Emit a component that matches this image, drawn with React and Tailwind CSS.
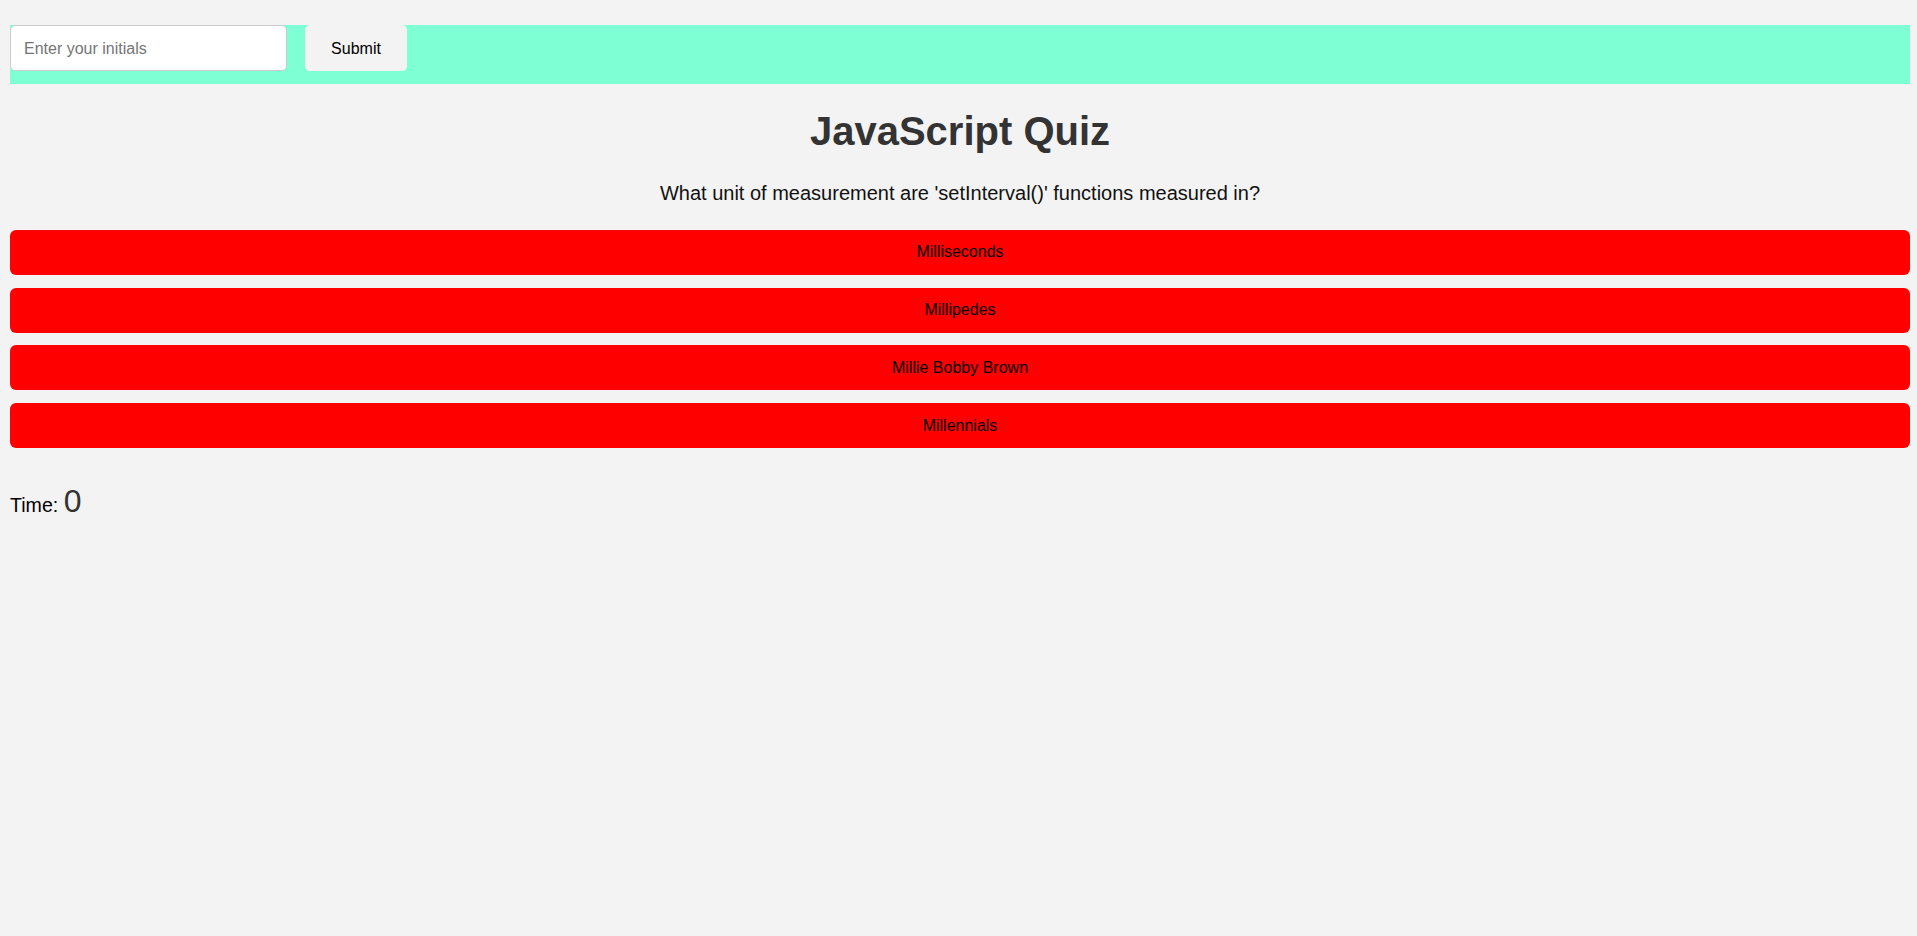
import React from "react";

const answers = ["Milliseconds", "Millipedes", "Millie Bobby Brown", "Millennials"];

export default function App() {
  return (
    <div className="min-h-[936px] bg-[#f3f3f3] pl-[10px] pr-[7px] pt-[25px] font-['Liberation_Sans',Arial,sans-serif] text-black">
      {/* Initials bar */}
      <div className="flex items-start gap-[18px] bg-[#7fffd4] pb-[13px]">
        <input
          type="text"
          placeholder="Enter your initials"
          className="h-[46px] w-[277px] rounded-[5px] border border-[#cccccc] bg-white px-[13px] pt-[2px] text-[16px] text-black placeholder:text-[#757575] outline-none"
        />
        <button className="h-[46px] w-[102px] rounded-[5px] bg-[#f3f3f3] pt-[2px] text-[16px] text-black">
          Submit
        </button>
      </div>

      <h1 className="mt-[24px] text-center text-[40px] font-bold leading-[46px] text-[#333333]">
        JavaScript Quiz
      </h1>
      <p className="mt-[27.6px] text-center text-[20px] leading-[23px] text-[#111111]">
        What unit of measurement are 'setInterval()' functions measured in?
      </p>

      <div className="mt-[25.4px] flex flex-col gap-[12.7px]">
        {answers.map((a) => (
          <button
            key={a}
            className="h-[45px] w-full rounded-[6px] bg-[#ff0000] text-[16px] text-black"
          >
            {a}
          </button>
        ))}
      </div>

      <div className="mt-[29px] text-[19.6px]">
        Time: <span className="text-[32px] text-[#333333]">0</span>
      </div>
    </div>
  );
}
